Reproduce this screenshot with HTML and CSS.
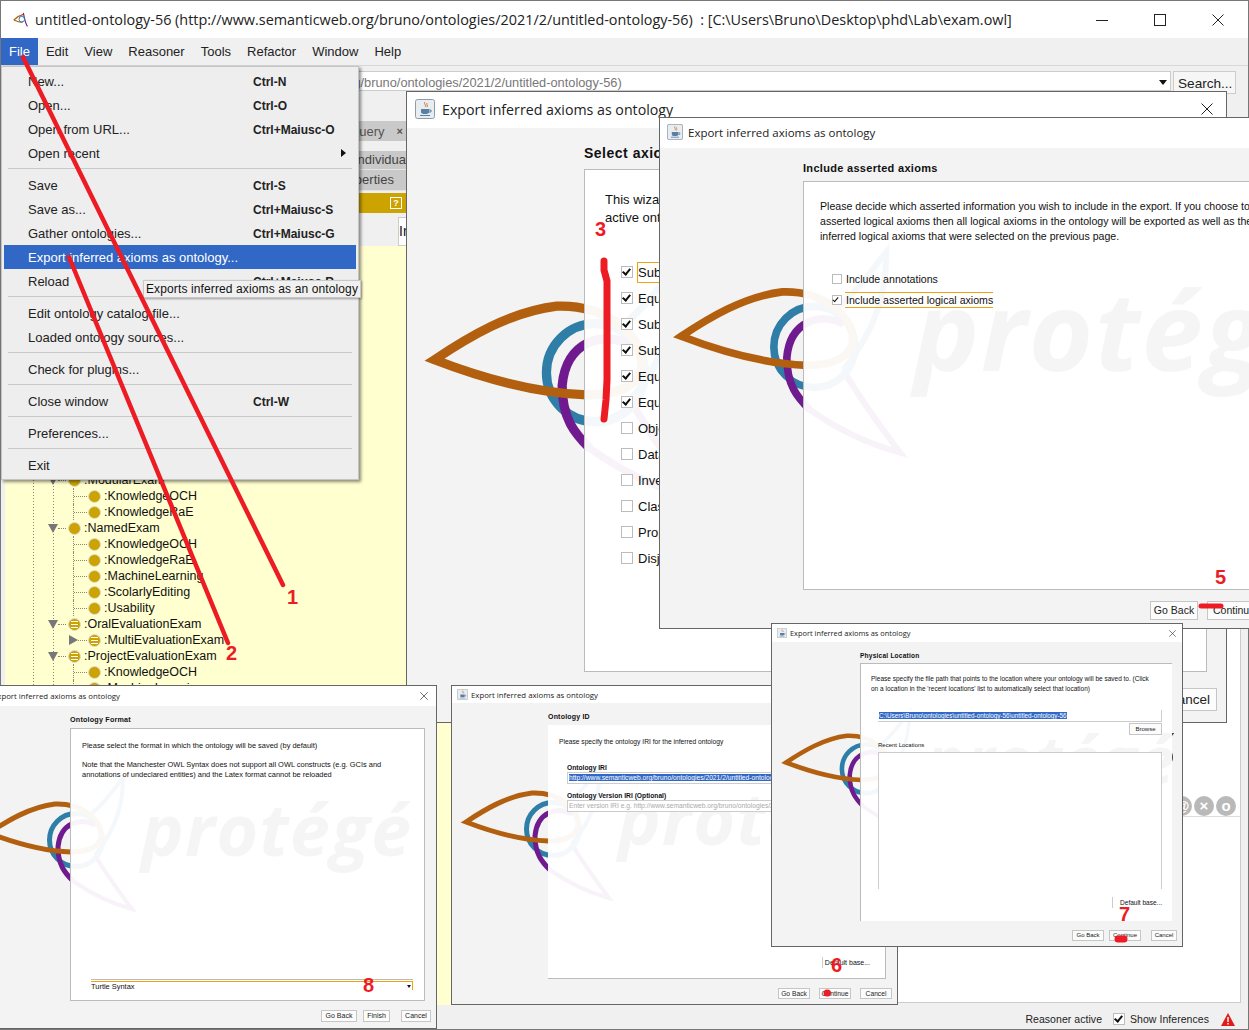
FILE: index.html
```html
<!DOCTYPE html>
<html lang="en">
<head>
    <meta charset="UTF-8">
    <title>untitled-ontology-56</title>
    <link rel="stylesheet" href="styles.css">
</head>
<body>
<svg class="defs" width="0" height="0">
    <symbol id="logo" viewBox="-6 -70 440 190">
        <path d="M105,-18 C120,-30 130,-45 138,-55 C138,-30 132,-5 110,22" fill="none" stroke="#2e7ea8" stroke-width="4"/>
        <path d="M110,22 C120,40 135,60 147,76 C125,70 105,60 88,48" fill="none" stroke="#6f1b8f" stroke-width="4"/>
        <circle cx="91" cy="7" r="26.5" fill="none" stroke="#2e7ea8" stroke-width="5"/>
        <path d="M110,-8 C95,-16 75,-10 73,14 C73,32 80,40 88,48" fill="none" stroke="#6f1b8f" stroke-width="5"/>
        <path d="M4,0 C22,-12 45,-26 70,-29 C95,-30 116,-15 116,2 C116,15 100,19 86,19 C58,18 30,10 4,0 Z" fill="none" stroke="#b2600f" stroke-width="5"/>
        <text class="logo-word" x="156" y="23" textLength="270">protégé</text>
    </symbol>
    <symbol id="java" viewBox="0 0 20 20">
        <rect x="0.5" y="0.5" width="19" height="19" rx="2" fill="#e8edf2" stroke="#8f9ba6"/>
        <path d="M10 3 C8 5 12 6 10 8 M12 4 C11 5 13 6 12 8" fill="none" stroke="#d9722a" stroke-width="1"/>
        <path d="M6 10 H14 V13 C14 14.5 12.5 15 10 15 C7.5 15 6 14.5 6 13 Z" fill="#5b7fa3"/>
        <path d="M14 11 H16 V13 H14 M5 16.5 H15" fill="none" stroke="#5b7fa3" stroke-width="1"/>
    </symbol>
    <symbol id="cross" viewBox="0 0 12 12">
        <path d="M0.5 0.5 L11.5 11.5 M11.5 0.5 L0.5 11.5" fill="none" stroke="#222" stroke-width="1"/>
    </symbol>
</svg>

<div class="screen">
    <div class="app">
        <div class="titlebar">
            <svg class="app-icon" viewBox="0 0 20 20">
                <path d="M1 10 C5 6 9 4 13 3 M1 10 C5 12 9 13 12 13" fill="none" stroke="#b2600f" stroke-width="1.6"/>
                <path d="M13 1 C14 7 15 13 18 18" fill="none" stroke="#6f1b8f" stroke-width="1.4"/>
                <circle cx="11" cy="9" r="3.5" fill="none" stroke="#2e7ea8" stroke-width="1.2"/>
            </svg>
            <span class="app-title">untitled-ontology-56 (http://www.semanticweb.org/bruno/ontologies/2021/2/untitled-ontology-56)&nbsp; : [C:\Users\Bruno\Desktop\phd\Lab\exam.owl]</span>
            <div class="winctl">
                <svg width="12" height="12" viewBox="0 0 12 12"><path d="M0 6.5 H12" stroke="#222"/></svg>
                <svg width="12" height="12" viewBox="0 0 12 12"><rect x="0.5" y="0.5" width="11" height="11" fill="none" stroke="#222"/></svg>
                <svg width="12" height="12"><use href="#cross"/></svg>
            </div>
        </div>

        <div class="menubar">
            <span class="menubar-item is-open">File</span>
            <span class="menubar-item">Edit</span>
            <span class="menubar-item">View</span>
            <span class="menubar-item">Reasoner</span>
            <span class="menubar-item">Tools</span>
            <span class="menubar-item">Refactor</span>
            <span class="menubar-item">Window</span>
            <span class="menubar-item">Help</span>
        </div>

        <div class="urlrow">
            <div class="urlbox">
                <span>untitled-ontology-56 (http://www.semanticweb.org/bruno/ontologies/2021/2/untitled-ontology-56)</span>
                <i class="combo-arrow"></i>
            </div>
            <div class="searchbtn">Search...</div>
        </div>

        <div class="workspace">
            <div class="leftcol">
                <div class="tabstrip"><span>DL Query</span><b>×</b></div>
                <div class="subtab subtab-ind">Individuals</div>
                <div class="subtab subtab-prop">Data properties</div>
                <div class="goldbar"><span class="help">?</span></div>
                <div class="filterrow"><span class="filterbox">In</span></div>
                <div class="tree">
                    <div class="row row-1"><i class="tri"></i><i class="dots"></i><i class="cls"></i>:ModularExam</div>
                    <div class="row row-2"><i class="elbow"></i><i class="cls"></i>:KnowledgeOCH</div>
                    <div class="row row-2"><i class="elbow"></i><i class="cls"></i>:KnowledgeRaE</div>
                    <div class="row row-1"><i class="tri"></i><i class="dots"></i><i class="cls"></i>:NamedExam</div>
                    <div class="row row-2"><i class="elbow"></i><i class="cls"></i>:KnowledgeOCH</div>
                    <div class="row row-2"><i class="elbow"></i><i class="cls"></i>:KnowledgeRaE</div>
                    <div class="row row-2"><i class="elbow"></i><i class="cls"></i>:MachineLearning</div>
                    <div class="row row-2"><i class="elbow"></i><i class="cls"></i>:ScolarlyEditing</div>
                    <div class="row row-2"><i class="elbow"></i><i class="cls"></i>:Usability</div>
                    <div class="row row-1"><i class="tri"></i><i class="dots"></i><i class="cls cls-eq"></i>:OralEvaluationExam</div>
                    <div class="row row-closed"><i class="tri-right"></i><i class="dots"></i><i class="cls cls-eq"></i>:MultiEvaluationExam</div>
                    <div class="row row-1"><i class="tri"></i><i class="dots"></i><i class="cls cls-eq"></i>:ProjectEvaluationExam</div>
                    <div class="row row-2"><i class="elbow"></i><i class="cls"></i>:KnowledgeOCH</div>
                    <div class="row row-2"><i class="elbow"></i><i class="cls"></i>:MachineLearning</div>
                </div>
            </div>
            <div class="rightcol">
                <div class="viewhead">
                    <span class="roundbtn">@</span>
                    <span class="roundbtn">×</span>
                    <span class="roundbtn">o</span>
                </div>
            </div>
        </div>

        <div class="statusbar">
            <span>Reasoner active</span>
            <i class="check is-on"></i>
            <span>Show Inferences</span>
            <svg class="warn" viewBox="0 0 14 13">
                <path d="M7 0 L14 13 H0 Z" fill="#e21a1a"/>
                <path d="M6.3 4 H7.7 V9 H6.3 Z M6.3 10 H7.7 V11.5 H6.3 Z" fill="#fff"/>
            </svg>
        </div>
    </div>

    <!-- wizard step 1 -->
    <div class="dialog d1">
        <div class="dialog-title">
            <svg class="java"><use href="#java"/></svg>
            <span>Export inferred axioms as ontology</span>
            <svg class="close"><use href="#cross"/></svg>
        </div>
        <div class="dialog-body">
            <svg class="logo"><use href="#logo"/></svg>
            <div class="dialog-head">Select axioms to export</div>
            <div class="panel">
                <p class="para">This wizard will export the inferred axioms of the<br>active ontology to a new ontology.</p>
                <div class="checks">
                    <label class="check-row"><i class="check is-on"></i><span class="focus">SubClassOf</span></label>
                    <label class="check-row"><i class="check is-on"></i><span>EquivalentClasses</span></label>
                    <label class="check-row"><i class="check is-on"></i><span>SubObjectPropertyOf</span></label>
                    <label class="check-row"><i class="check is-on"></i><span>SubDataPropertyOf</span></label>
                    <label class="check-row"><i class="check is-on"></i><span>EquivalentObjectProperties</span></label>
                    <label class="check-row"><i class="check is-on"></i><span>EquivalentDataProperties</span></label>
                    <label class="check-row"><i class="check"></i><span>ObjectPropertyAssertion</span></label>
                    <label class="check-row"><i class="check"></i><span>DataPropertyAssertion</span></label>
                    <label class="check-row"><i class="check"></i><span>InverseObjectProperties</span></label>
                    <label class="check-row"><i class="check"></i><span>ClassAssertion</span></label>
                    <label class="check-row"><i class="check"></i><span>PropertyAssertion</span></label>
                    <label class="check-row"><i class="check"></i><span>DisjointClasses</span></label>
                </div>
            </div>
            <div class="dialog-foot">
                <span class="btn">Go Back</span>
                <span class="btn">Continue</span>
                <span class="btn">Cancel</span>
            </div>
        </div>
    </div>

    <!-- wizard step 2 -->
    <div class="dialog d2">
        <div class="dialog-title">
            <svg class="java"><use href="#java"/></svg>
            <span>Export inferred axioms as ontology</span>
        </div>
        <div class="dialog-body">
            <svg class="logo"><use href="#logo"/></svg>
            <div class="dialog-head">Include asserted axioms</div>
            <div class="panel">
                <p class="para">Please decide which asserted information you wish to include in the export. If you choose to<br>asserted logical axioms then all logical axioms in the ontology will be exported as well as the<br>inferred logical axioms that were selected on the previous page.</p>
                <div class="checks">
                    <label class="check-row"><i class="check"></i><span>Include annotations</span></label>
                    <label class="check-row"><i class="check is-on"></i><span class="focus">Include asserted logical axioms</span></label>
                </div>
            </div>
            <div class="dialog-foot">
                <span class="btn">Go Back</span>
                <span class="btn">Continue</span>
            </div>
        </div>
    </div>

    <!-- wizard step 4: ontology id -->
    <div class="dialog d3">
        <div class="dialog-title">
            <svg class="java"><use href="#java"/></svg>
            <span>Export inferred axioms as ontology</span>
        </div>
        <div class="dialog-body">
            <svg class="logo"><use href="#logo"/></svg>
            <div class="dialog-head">Ontology ID</div>
            <div class="panel">
                <p class="para">Please specify the ontology IRI for the inferred ontology</p>
                <div class="field-label field-first">Ontology IRI</div>
                <div class="field"><span class="selected">http://www.semanticweb.org/bruno/ontologies/2021/2/untitled-ontology-56</span></div>
                <div class="field-label">Ontology Version IRI (Optional)</div>
                <div class="field field-empty">Enter version IRI e.g. http://www.semanticweb.org/bruno/ontologies/2021/2/untitled</div>
                <div class="basebtn">Default base...</div>
            </div>
            <div class="dialog-foot">
                <span class="btn">Go Back</span>
                <span class="btn">Continue</span>
                <span class="btn">Cancel</span>
            </div>
        </div>
    </div>

    <!-- wizard step 3: physical location -->
    <div class="dialog d5">
        <div class="dialog-title">
            <svg class="java"><use href="#java"/></svg>
            <span>Export inferred axioms as ontology</span>
            <svg class="close"><use href="#cross"/></svg>
        </div>
        <div class="dialog-body">
            <svg class="logo"><use href="#logo"/></svg>
            <div class="dialog-head">Physical Location</div>
            <div class="panel">
                <p class="para">Please specify the file path that points to the location where your ontology will be saved to. (Click<br>on a location in the 'recent locations' list to automatically select that location)</p>
                <div class="field"><span class="selected">C:\Users\Bruno\ontologies\untitled-ontology-56\untitled-ontology-56</span></div>
                <div class="browse"><span class="btn">Browse</span></div>
                <div class="field-label">Recent Locations</div>
                <div class="recent"></div>
                <div class="basebtn">Default base...</div>
            </div>
            <div class="dialog-foot">
                <span class="btn">Go Back</span>
                <span class="btn">Continue</span>
                <span class="btn btn-last">Cancel</span>
            </div>
        </div>
    </div>

    <!-- wizard last step: format -->
    <div class="dialog d4">
        <div class="dialog-title">
            <svg class="java"><use href="#java"/></svg>
            <span>Export inferred axioms as ontology</span>
            <svg class="close"><use href="#cross"/></svg>
        </div>
        <div class="dialog-body">
            <svg class="logo"><use href="#logo"/></svg>
            <div class="dialog-head">Ontology Format</div>
            <div class="panel">
                <p class="para">Please select the format in which the ontology will be saved (by default)</p>
                <p class="para para-note">Note that the Manchester OWL Syntax does not support all OWL constructs (e.g. GCIs and<br>annotations of undeclared entities) and the Latex format cannot be reloaded</p>
                <div class="formatbox"><div class="formatbox-in"><span>Turtle Syntax</span><i class="combo-arrow"></i></div></div>
            </div>
            <div class="dialog-foot">
                <span class="btn">Go Back</span>
                <span class="btn">Finish</span>
                <span class="btn btn-last">Cancel</span>
            </div>
        </div>
    </div>

    <!-- open menu -->
    <div class="menu">
        <div class="menu-item"><span>New...</span><b>Ctrl-N</b></div>
        <div class="menu-item"><span>Open...</span><b>Ctrl-O</b></div>
        <div class="menu-item"><span>Open from URL...</span><b>Ctrl+Maiusc-O</b></div>
        <div class="menu-item"><span>Open recent</span><i class="submenu"></i></div>
        <hr class="menu-sep">
        <div class="menu-item"><span>Save</span><b>Ctrl-S</b></div>
        <div class="menu-item"><span>Save as...</span><b>Ctrl+Maiusc-S</b></div>
        <div class="menu-item"><span>Gather ontologies...</span><b>Ctrl+Maiusc-G</b></div>
        <div class="menu-item is-active"><span>Export inferred axioms as ontology...</span></div>
        <div class="menu-item"><span>Reload</span><b>Ctrl+Maiusc-R</b></div>
        <hr class="menu-sep">
        <div class="menu-item"><span>Edit ontology catalog file...</span></div>
        <div class="menu-item"><span>Loaded ontology sources...</span></div>
        <hr class="menu-sep">
        <div class="menu-item"><span>Check for plugins...</span></div>
        <hr class="menu-sep">
        <div class="menu-item"><span>Close window</span><b>Ctrl-W</b></div>
        <hr class="menu-sep">
        <div class="menu-item"><span>Preferences...</span></div>
        <hr class="menu-sep">
        <div class="menu-item"><span>Exit</span></div>
    </div>
    <div class="tooltip">Exports inferred axioms as an ontology</div>

    <!-- red marks drawn over the screenshot -->
    <svg class="marks" width="1249" height="1030" viewBox="0 0 1249 1030">
        <g fill="none" stroke="#ed1c24" stroke-linecap="round" stroke-linejoin="round">
            <path d="M23 57 L283 585" stroke-width="4.5"/>
            <path d="M69 257 L228 643" stroke-width="4.5"/>
            <path d="M604 261 L604 270 L607 281 L607 380 L606 400 L604 419" stroke-width="7"/>
            <path d="M1201 606 L1221 606" stroke-width="5"/>
            <path d="M827 993 L827.5 993" stroke-width="7"/>
            <path d="M1118 939 L1124 939" stroke-width="7"/>
        </g>
        <text class="mark-num" x="287" y="604">1</text>
        <text class="mark-num" x="226" y="660">2</text>
        <text class="mark-num" x="595" y="236">3</text>
        <text class="mark-num" x="1215" y="584">5</text>
        <text class="mark-num" x="831" y="972">6</text>
        <text class="mark-num" x="1119" y="921">7</text>
        <text class="mark-num" x="363" y="992">8</text>
    </svg>
</div>
</body>
</html>
```

FILE: styles.css
```css
body {
    margin: 0;
    background: #f0f0f0;
    font-family: "Liberation Sans", Arial, sans-serif;
    color: #111;
}
.defs {
    position: absolute;
}
.screen {
    position: relative;
    width: 1249px;
    height: 1030px;
    overflow: hidden;
}

/* main window */
.app {
    height: 1030px;
    box-sizing: border-box;
    border: 1px solid #777;
    display: flex;
    flex-direction: column;
    background: #f0f0f0;
}
.titlebar {
    height: 37px;
    flex: none;
    display: flex;
    align-items: center;
    background: #fff;
    padding-left: 12px;
}
.app-icon {
    width: 16px;
    height: 16px;
    margin-right: 6px;
}
.app-title {
    font-family: "Open Sans", sans-serif;
    font-size: 14.4px;
    color: #222;
    white-space: nowrap;
}
.winctl {
    margin-left: auto;
    margin-right: 24px;
    display: flex;
    gap: 46px;
}
.menubar {
    height: 28px;
    flex: none;
    display: flex;
    gap: 0;
    font-size: 13px;
    color: #222;
    border-bottom: 1px solid #d8d8d8;
    box-sizing: border-box;
}
.menubar-item {
    padding: 0 8px;
    line-height: 27px;
}
.menubar-item.is-open {
    background: #3168c6;
    color: #fff;
}
.urlrow {
    height: 29px;
    flex: none;
    display: flex;
    gap: 2px;
    box-sizing: border-box;
    padding: 5px 12px 0 75px;
}
.urlbox {
    flex: 1;
    height: 20px;
    background: #fff;
    border: 1px solid #ccc;
    box-sizing: border-box;
    display: flex;
    align-items: center;
    justify-content: space-between;
    padding: 3px 3px 0 4px;
    font-size: 12.8px;
    color: #777;
    white-space: nowrap;
}
.combo-arrow {
    width: 0;
    height: 0;
    border-left: 4px solid transparent;
    border-right: 4px solid transparent;
    border-top: 5px solid #111;
}
.searchbtn {
    width: 63px;
    height: 23px;
    box-sizing: border-box;
    border: 1px solid #ccc;
    background: #f6f6f6;
    font-size: 13.6px;
    line-height: 24px;
    padding-left: 4px;
    color: #222;
}
.workspace {
    flex: 1;
    display: flex;
    min-height: 0;
}
.leftcol {
    width: 560px;
    flex: none;
    padding-top: 26px;
    box-sizing: border-box;
    display: flex;
    flex-direction: column;
}
.tabstrip {
    height: 20px;
    background: #c9c9c9;
    display: flex;
    justify-content: flex-end;
    align-items: center;
    gap: 12px;
    padding-right: 158px;
    margin-bottom: 10px;
    font-size: 13px;
    color: #555;
}
.tabstrip b {
    font-size: 11px;
}
.subtab {
    height: 18px;
    background: #c9c9c9;
    border-bottom: 1px solid #e4e4e4;
    font-size: 13px;
    line-height: 17px;
    color: #444;
}
.subtab-ind {
    padding-left: 353px;
}
.subtab-prop {
    height: 20px;
    line-height: 20px;
    padding-left: 304px;
}
.goldbar {
    height: 20px;
    margin-top: 2px;
    background: #cca300;
    display: flex;
    justify-content: flex-end;
    align-items: center;
    padding-right: 159px;
}
.help {
    width: 10px;
    height: 10px;
    border: 1px solid #fff;
    color: #fff;
    font-size: 9px;
    font-weight: bold;
    line-height: 10px;
    text-align: center;
}
.filterrow {
    height: 33px;
    box-sizing: border-box;
    padding: 4px 0 0 397px;
    background: #f0f0f0;
    display: flex;
}
.filterbox {
    width: 60px;
    height: 29px;
    box-sizing: border-box;
    background: #fff;
    border: 1px solid #ccc;
    font-size: 14px;
    line-height: 27px;
}
.tree {
    flex: 1;
    margin-left: 4px;
    padding-top: 226px;
    background-color: #ffffd0;
    background-image:
        repeating-linear-gradient(to bottom, #8a8a70 0 1px, transparent 1px 3px),
        repeating-linear-gradient(to bottom, #8a8a70 0 1px, transparent 1px 3px);
    background-size: 1px 100%, 1px 100%;
    background-repeat: no-repeat;
    background-position: 28px 0, 48px 0;
    font-size: 12.5px;
    overflow: hidden;
}
.row {
    height: 16px;
    display: flex;
    align-items: center;
    white-space: nowrap;
}
.row-1 {
    margin-left: 43px;
}
.row-2 {
    margin-left: 68px;
    border-left: 1px dotted #8a8a70;
}
.row-closed {
    margin-left: 59px;
}
.tri {
    width: 0;
    height: 0;
    border-left: 5px solid transparent;
    border-right: 5px solid transparent;
    border-top: 9px solid #777;
}
.tri-right {
    width: 0;
    height: 0;
    margin-left: 5px;
    border-top: 5px solid transparent;
    border-bottom: 5px solid transparent;
    border-left: 9px solid #777;
}
.dots {
    width: 8px;
    border-top: 1px dotted #8a8a70;
    margin-right: 2px;
}
.row-closed .dots {
    width: 9px;
    margin-right: 1px;
}
.elbow {
    width: 13px;
    border-top: 1px dotted #8a8a70;
    margin-right: 1px;
}
.cls {
    width: 11px;
    height: 11px;
    flex: none;
    margin-right: 3px;
    border: 1px solid #ddd;
    border-radius: 50%;
    background: #cca300;
    display: flex;
    align-items: center;
    justify-content: center;
}
.cls-eq::after {
    content: "";
    width: 7px;
    height: 5px;
    border-top: 1px solid #fff;
    border-bottom: 1px solid #fff;
    background: linear-gradient(#fff, #fff) center / 100% 1px no-repeat;
}
.rightcol {
    flex: 1;
    margin: 24px 7px 2px 0;
    background: #fff;
    border: 1px solid #ccc;
    display: flex;
    flex-direction: column;
    padding-top: 676px;
}
.viewhead {
    height: 20px;
    padding-right: 4px;
    border-bottom: 1px solid #ddd;
    display: flex;
    justify-content: flex-end;
    gap: 2px;
}
.roundbtn {
    width: 20px;
    height: 20px;
    border-radius: 50%;
    background: #b9b9b9;
    color: #fff;
    font-size: 15px;
    font-weight: bold;
    line-height: 19px;
    text-align: center;
}
.statusbar {
    height: 24px;
    flex: none;
    box-sizing: border-box;
    padding: 4px 13px 0 0;
    display: flex;
    align-items: center;
    justify-content: flex-end;
    font-size: 10.5px;
    letter-spacing: 0.05px;
    color: #222;
}
.statusbar .check {
    margin: 0 5px 0 11px;
}
.warn {
    width: 14px;
    height: 13px;
    margin-left: 12px;
}

/* check boxes, shared */
.check {
    position: relative;
    flex: none;
    width: 10px;
    height: 10px;
    display: block;
    border: 1px solid #bcbcbc;
    background: #fff;
}
.check.is-on::after {
    content: "";
    position: absolute;
    left: 2px;
    top: 0;
    width: 3px;
    height: 6px;
    border-right: 2px solid #111;
    border-bottom: 2px solid #111;
    transform: rotate(40deg);
}

/* wizard dialogs */
.dialog {
    position: absolute;
    box-sizing: border-box;
    display: flex;
    flex-direction: column;
    background: #f3f3f3;
    border: 1px solid #666;
}
.dialog-title {
    flex: none;
    display: flex;
    align-items: center;
    background: #fff;
    font-family: "Open Sans", sans-serif;
    color: #222;
    white-space: nowrap;
}
.close {
    margin-left: auto;
}
.dialog-body {
    position: relative;
    flex: 1;
    min-height: 0;
    display: flex;
    flex-direction: column;
}
.logo {
    position: absolute;
}
.logo-word {
    font-family: "Open Sans", sans-serif;
    font-style: italic;
    font-weight: 700;
    font-size: 72px;
    fill: #444;
}
.dialog-head {
    position: relative;
    flex: none;
    font-weight: bold;
    white-space: nowrap;
}
.panel {
    position: relative;
    flex: 1;
    min-height: 0;
    box-sizing: border-box;
    display: flex;
    flex-direction: column;
    background: rgba(255, 255, 255, 0.95);
    border: 1px solid #bbb;
    white-space: nowrap;
}
.para {
    margin: 0;
}
.checks {
    display: flex;
    flex-direction: column;
}
.check-row {
    display: flex;
    align-items: center;
}
.focus {
    border: 1px solid #f0a30a;
}
.dialog-foot {
    position: relative;
    flex: none;
    display: flex;
    justify-content: flex-end;
}
.btn {
    box-sizing: border-box;
    text-align: center;
    background: #fcfcfc;
    border: 1px solid #c6c6c6;
    color: #222;
}
.field {
    background: #fff;
    border: 1px solid #ccc;
    box-sizing: border-box;
    overflow: hidden;
}
.selected {
    background: #3168c6;
    color: #fff;
}
.field-empty {
    color: #aaa;
}
.basebtn {
    margin-top: auto;
    align-self: flex-end;
    border-left: 1px solid #ccc;
    box-sizing: border-box;
    text-align: right;
}

/* step 1 */
.d1 {
    left: 406px;
    top: 91px;
    width: 821px;
    height: 632px;
}
.d1 .dialog-title {
    height: 36px;
    font-size: 14.2px;
    padding: 0 13px 2px 8px;
    box-sizing: border-box;
    gap: 7px;
}
.d1 .java {
    width: 20px;
    height: 20px;
}
.d1 .close {
    width: 12px;
    height: 12px;
}
.d1 .dialog-body {
    padding: 0 19px 0 177px;
}
.d1 .logo {
    left: 9px;
    top: 102px;
    width: 814px;
    height: 352px;
}
.d1 .dialog-head {
    height: 41px;
    line-height: 50px;
    font-size: 14px;
    letter-spacing: 0.5px;
}
.d1 .panel {
    padding: 21px 0 0 20px;
    font-size: 13px;
}
.d1 .para {
    line-height: 18px;
}
.d1 .checks {
    margin-top: 32px;
    margin-left: 16px;
}
.d1 .check-row {
    height: 26px;
    gap: 4px;
}
.d1 .check-row span {
    padding: 2px 0 2px 1px;
}
.d1 .check-row .focus {
    padding-left: 0;
}
.d1 .dialog-foot {
    padding-top: 16px;
    height: 50px;
    box-sizing: border-box;
    margin-right: -10px;
    gap: 8px;
    font-size: 13.5px;
}
.d1 .btn {
    height: 23px;
    line-height: 22px;
    padding: 0 6px;
}

/* step 2 */
.d2 {
    left: 659px;
    top: 117px;
    width: 700px;
    height: 512px;
}
.d2 .dialog-title {
    height: 30px;
    font-size: 11.5px;
    padding: 0 0 2px 7px;
    box-sizing: border-box;
    gap: 5px;
}
.d2 .java {
    width: 16px;
    height: 16px;
}
.d2 .dialog-body {
    padding: 0 40px 0 143px;
}
.d2 .logo {
    left: 6px;
    top: 81px;
    width: 673px;
    height: 291px;
}
.d2 .dialog-head {
    height: 33px;
    line-height: 40px;
    font-size: 11px;
    letter-spacing: 0.3px;
}
.d2 .panel {
    padding: 17px 0 0 16px;
    font-size: 10.6px;
}
.d2 .para {
    line-height: 15px;
}
.d2 .checks {
    margin-top: 24px;
    margin-left: 12px;
}
.d2 .check-row {
    height: 21px;
    gap: 3px;
}
.d2 .check {
    width: 8px;
    height: 8px;
}
.d2 .check.is-on::after {
    left: 1px;
    width: 2px;
    height: 5px;
    border-width: 0 1px 1px 0;
}
.d2 .check-row span {
    padding: 1px 0 1px 1px;
}
.d2 .focus {
    border-left: 0;
    border-right: 0;
    padding-right: 0;
}
.d2 .dialog-foot {
    padding: 11px 0 0 347px;
    height: 38px;
    box-sizing: border-box;
    justify-content: flex-start;
    gap: 9px;
    font-size: 10.5px;
}
.d2 .btn {
    height: 19px;
    line-height: 17px;
    width: 48px;
}
.d2 .btn + .btn {
    width: 54px;
}

/* ontology id */
.d3 {
    left: 451px;
    top: 685px;
    width: 447px;
    height: 320px;
}
.d3 .dialog-title {
    height: 17px;
    font-size: 7.8px;
    padding-left: 5px;
    gap: 3px;
}
.d3 .java {
    width: 11px;
    height: 11px;
}
.d3 .dialog-body {
    padding: 0 11px 0 96px;
}
.d3 .logo {
    left: 4px;
    top: 49px;
    width: 440px;
    height: 190px;
}
.d3 .dialog-head {
    height: 22px;
    line-height: 27px;
    font-size: 7px;
    letter-spacing: 0.2px;
}
.d3 .panel {
    padding: 12px 0 0 11px;
    font-size: 6.7px;
    border-width: 0 1px 1px 0;
}
.d3 .para {
    line-height: 9px;
}
.d3 .field-label {
    margin: 7px 0 0 8px;
    line-height: 9px;
    font-weight: bold;
}
.d3 .field-first {
    margin-top: 17px;
}
.d3 .field {
    margin: 0 0 0 8px;
    width: 306px;
    height: 12px;
    line-height: 10px;
    padding-left: 1px;
}
.d3 .basebtn {
    margin-bottom: 10px;
    margin-right: 13px;
    width: 50px;
    height: 11px;
    line-height: 11px;
    padding-right: 2px;
    font-size: 7px;
}
.d3 .dialog-foot {
    padding-top: 9px;
    height: 25px;
    box-sizing: border-box;
    margin-right: -6px;
    gap: 9px;
}
.d3 .btn {
    font-size: 6.7px;
    height: 11px;
    line-height: 9px;
    width: 32px;
}

/* physical location */
.d5 {
    left: 771px;
    top: 623px;
    width: 412px;
    height: 324px;
}
.d5 .dialog-title {
    height: 18px;
    font-size: 7.4px;
    padding: 0 6px 0 5px;
    gap: 3px;
}
.d5 .java {
    width: 10px;
    height: 10px;
}
.d5 .close {
    width: 7px;
    height: 7px;
}
.d5 .dialog-body {
    padding: 0 10px 0 88px;
}
.d5 .logo {
    left: 5px;
    top: 56px;
    width: 405px;
    height: 175px;
}
.d5 .dialog-head {
    height: 21px;
    line-height: 27px;
    font-size: 6.6px;
    letter-spacing: 0.2px;
}
.d5 .panel {
    padding: 10px 10px 0 10px;
    font-size: 6.5px;
    border-width: 1px 0 0 1px;
}
.d5 .para {
    line-height: 10px;
}
.d5 .field {
    margin: 16px 0 0 7px;
    height: 12px;
    line-height: 11px;
    padding-left: 1px;
    border-width: 0 1px 1px 0;
    font-size: 6.3px;
}
.d5 .browse {
    display: flex;
    justify-content: flex-end;
    margin-top: 1px;
}
.d5 .browse .btn {
    width: 33px;
    height: 12px;
    line-height: 10px;
}
.d5 .field-label {
    margin: 6px 0 0 7px;
    line-height: 9px;
    font-size: 6px;
}
.d5 .recent {
    margin: 2px 0 0 7px;
    height: 137px;
    background: #fff;
    border: 1px solid #ccc;
    border-bottom: 0;
    box-sizing: border-box;
}
.d5 .basebtn {
    margin-top: 8px;
    width: 50px;
    height: 11px;
    line-height: 11px;
}
.d5 .dialog-foot {
    padding-top: 9px;
    height: 25px;
    box-sizing: border-box;
    margin-right: -5px;
    gap: 5px;
}
.d5 .btn {
    font-size: 6px;
    height: 11px;
    line-height: 9px;
    width: 32px;
}
.d5 .btn-last {
    width: 26px;
    margin-left: 5px;
}

/* format */
.d4 {
    left: -10px;
    top: 685px;
    width: 447px;
    height: 344px;
}
.d4 .dialog-title {
    height: 20px;
    font-size: 7.8px;
    padding: 0 8px 0 1px;
    gap: 1px;
}
.d4 .java {
    width: 0;
    height: 0;
}
.d4 .close {
    width: 8px;
    height: 8px;
}
.d4 .dialog-body {
    padding: 0 11px 0 79px;
}
.d4 .logo {
    left: -12px;
    top: 57px;
    width: 440px;
    height: 190px;
}
.d4 .dialog-head {
    height: 22px;
    line-height: 27px;
    font-size: 7.2px;
    letter-spacing: 0.2px;
}
.d4 .panel {
    padding: 12px 11px 10px 11px;
    font-size: 7.45px;
}
.d4 .para {
    line-height: 10px;
}
.d4 .para-note {
    margin-top: 9px;
}
.d4 .formatbox {
    margin: auto 0 0 9px;
    border-top: 1px solid #bbb;
}
.d4 .formatbox-in {
    margin-top: 1px;
    height: 8px;
    border-top: 1px solid #f0a30a;
    border-right: 1px solid #f0a30a;
    display: flex;
    align-items: center;
    justify-content: space-between;
    line-height: 7px;
}
.d4 .combo-arrow {
    border-left-width: 2px;
    border-right-width: 2px;
    border-top-width: 3px;
    margin-right: 1px;
}
.d4 .dialog-foot {
    padding-top: 9px;
    height: 27px;
    box-sizing: border-box;
    margin-right: -6px;
    gap: 6px;
}
.d4 .btn {
    font-size: 7px;
    height: 12px;
    line-height: 10px;
    width: 36px;
}
.d4 .btn + .btn {
    width: 27px;
}
.d4 .btn-last {
    margin-left: 5px;
    width: 30px !important;
}

/* menu over everything */
.menu {
    position: absolute;
    left: 1px;
    top: 66px;
    width: 358px;
    height: 414px;
    box-sizing: border-box;
    padding: 2px 2px 0;
    background: #eee;
    border: 1px solid #c4c4c4;
    box-shadow: 2px 2px 3px rgba(0, 0, 0, 0.45);
    font-size: 13px;
    color: #222;
}
.menu-item {
    height: 24px;
    display: flex;
    align-items: center;
    padding-left: 24px;
    position: relative;
    white-space: nowrap;
}
.menu-item span {
    width: 225px;
    flex: none;
}
.menu-item b {
    font-size: 12px;
    margin-top: 2px;
}
.menu-item.is-active {
    background: #3168c6;
    color: #fff;
}
.submenu {
    margin-left: 88px;
    width: 0;
    height: 0;
    border-top: 4px solid transparent;
    border-bottom: 4px solid transparent;
    border-left: 5px solid #111;
}
.menu-sep {
    margin: 3px 4px 4px;
    height: 0;
    border: 0;
    border-top: 1px solid #c8c8c8;
}
.tooltip {
    position: absolute;
    left: 143px;
    top: 280px;
    width: 218px;
    height: 18px;
    box-sizing: border-box;
    padding-left: 2px;
    background: #f0f0f0;
    border: 1px solid #c8c8c8;
    box-shadow: 1px 1px 2px rgba(0, 0, 0, 0.35);
    font-size: 12px;
    line-height: 16px;
    letter-spacing: 0.12px;
    white-space: nowrap;
}

.marks {
    position: absolute;
    left: 0;
    top: 0;
}
.mark-num {
    font-family: "Liberation Sans", sans-serif;
    font-weight: bold;
    font-size: 20px;
    fill: #ed1c24;
}
```
